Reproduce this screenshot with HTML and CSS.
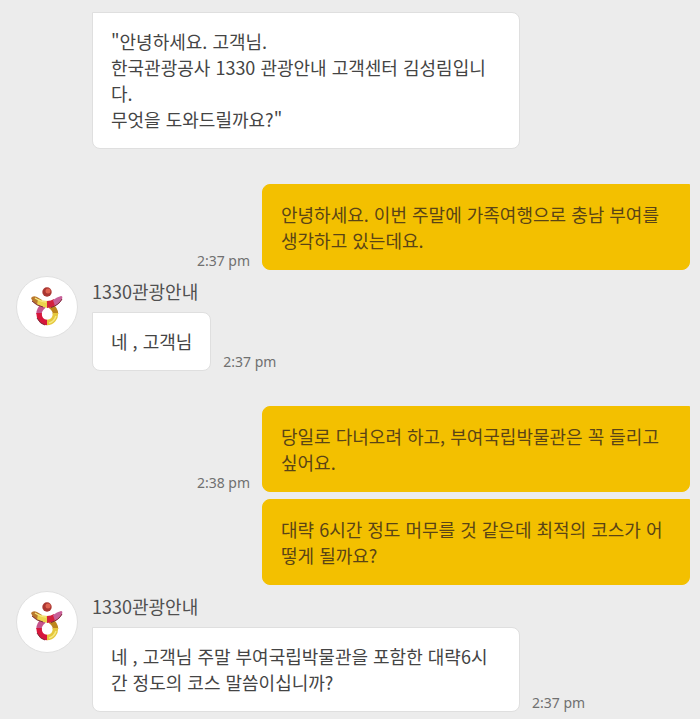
FILE: index.html
```
<!DOCTYPE html>
<html lang="ko">
<head>
<meta charset="utf-8">
<meta name="viewport" content="width=device-width, initial-scale=1">
<title>1330관광안내</title>
<link rel="stylesheet" href="styles.css">
</head>
<body>
<svg class="defs" aria-hidden="true">
  <symbol id="logo" viewBox="0 0 32 40">
    <circle cx="16" cy="5" r="4.700" fill="#a93632"/>
    <circle cx="17" cy="4" r="2.500" fill="#df6350"/>
    <g fill="none" stroke-width="5.500">
      <path d="M8 27Q8 22 13 18.500" stroke="#c5548d"/>
      <path d="M19 18.500Q24.500 22 24.500 27" stroke="#bd861d"/>
      <path d="M8 26C8 31 11 35.500 16.200 35.500" stroke="#d6163b"/>
      <path d="M16 35.500C21.500 35.500 24.500 31 24.500 26" stroke="#e5c73c"/>
    </g>
    <path d="M0 11Q2 8 6 10L11 13L9 19Q2 17 0 11Z" fill="#b9782c"/>
    <path d="M7 12Q11 14 17 14V21Q11 20 6 18Z" fill="#ecd34d"/>
    <path d="M16 14Q20 14 23 12L25 18Q21 21 16 21Z" fill="#d3203c"/>
    <path d="M22 13Q26 10 30 9Q32 9 31 12Q29 17 24 19Z" fill="#c76099"/>
    <path d="M4 11Q10 15 15 15M18 36Q23 35 25 29" fill="none" stroke="#f5e982" stroke-width="1.500"/>
    <path d="M1 14Q5 18.500 12 20M20 20.500Q28 18 31 12M6 31Q9 37 14 38" fill="none" stroke="#7d2b38" stroke-width="1"/>
  </symbol>
</svg>
<main class="chat">
  <article class="message agent continued">
    <div class="line">
      <p class="bubble">"안녕하세요. 고객님.<br>한국관광공사 1330 관광안내 고객센터 김성림입니다.<br>무엇을 도와드릴까요?"</p>
    </div>
  </article>

  <article class="message customer">
    <div class="line">
      <time class="time">2:37 pm</time>
      <p class="bubble">안녕하세요. 이번 주말에 가족여행으로 충남 부여를 생각하고 있는데요.</p>
    </div>
  </article>

  <article class="message agent">
    <div class="avatar"><svg class="logo" aria-hidden="true"><use href="#logo"/></svg></div>
    <div class="content">
      <h2 class="name">1330관광안내</h2>
      <div class="line">
        <p class="bubble">네 , 고객님</p>
        <time class="time">2:37 pm</time>
      </div>
    </div>
  </article>

  <article class="message customer">
    <div class="line">
      <time class="time">2:38 pm</time>
      <p class="bubble">당일로 다녀오려 하고, 부여국립박물관은 꼭 들리고 싶어요.</p>
    </div>
    <div class="line">
      <p class="bubble">대략 6시간 정도 머무를 것 같은데 최적의 코스가 어떻게 될까요?</p>
    </div>
  </article>

  <article class="message agent">
    <div class="avatar"><svg class="logo" aria-hidden="true"><use href="#logo"/></svg></div>
    <div class="content">
      <h2 class="name">1330관광안내</h2>
      <div class="line">
        <p class="bubble">네 , 고객님 주말 부여국립박물관을 포함한 대략6시간 정도의 코스 말씀이십니까?</p>
        <time class="time">2:37 pm</time>
      </div>
    </div>
  </article>
</main>
</body>
</html>
```
FILE: styles.css
```
* {
  box-sizing: border-box;
}

body {
  margin: 0;
  background: #ececec;
  color: #444;
  font-family: "Noto Sans CJK KR", sans-serif;
  font-size: 18px;
  line-height: 26px;
}

.defs {
  display: none;
}

.chat {
  padding: 12px 10px 7px 16px;
}

.message {
  display: flex;
}

.agent {
  gap: 14px;
  margin-top: 6px;
}

.agent.continued {
  margin-top: 0;
  padding-left: 76px;
}

.customer {
  flex-direction: column;
  align-items: flex-end;
  gap: 7px;
  margin-top: 35px;
}

.content {
  flex: 1;
  min-width: 0;
}

.line {
  display: flex;
  align-items: flex-end;
  gap: 12px;
}

.avatar {
  display: flex;
  flex: none;
  align-items: center;
  justify-content: center;
  width: 62px;
  height: 62px;
  border: 1px solid #e0e0e0;
  border-radius: 50%;
  background: #fff;
}

.logo {
  width: 32px;
  height: 40px;
}

.name {
  margin: 0 0 6px;
  color: #505050;
  font-size: 18px;
  font-weight: 400;
  line-height: 30px;
}

.bubble {
  max-width: 428px;
  margin: 0;
  padding: 15px 18px 16px;
  border: 1px solid #dfdfdf;
  border-radius: 0 8px 8px 8px;
  background: #fff;
}

.customer .bubble {
  padding-top: 16px;
  border-color: #f3c000;
  border-radius: 8px 0 8px 8px;
  background: #f3c000;
  color: #5a4416;
}

.time {
  flex: none;
  color: #707070;
  font-family: "Noto Sans", sans-serif;
  font-size: 14px;
  line-height: 18px;
}
```
